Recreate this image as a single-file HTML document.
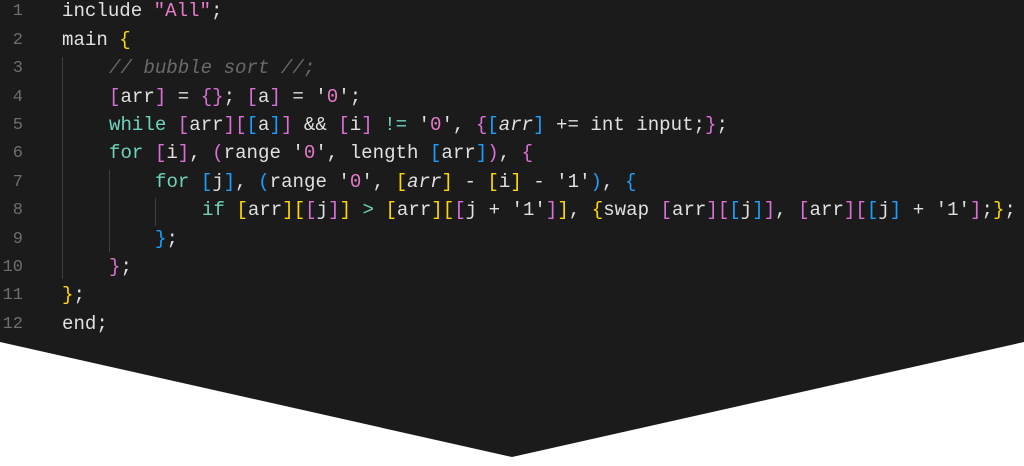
<!DOCTYPE html>
<html><head><meta charset="utf-8"><style>
html,body{margin:0;padding:0;width:1024px;height:466px;overflow:hidden;background:#fff}
.bg{position:absolute;left:0;top:0;width:1024px;height:466px;background:#1b1b1b;clip-path:polygon(0 0,1024px 0,1024px 342px,512px 457px,0 342px)}
.ln{position:absolute;left:0;width:23px;text-align:right;color:#6e6e6e;font:17px "Liberation Mono",monospace}
.l{position:absolute;white-space:pre;font:19.1px "Liberation Mono",monospace;color:#e0e0e0}
.g{position:absolute;width:1px;background:#404040}
.k{color:#6fd2bd}.s{color:#e67ac8}.c{color:#6a6a6a;font-style:italic}
.y{color:#ffd700}.p{color:#da70d6}.b{color:#1a9fff}.i{font-style:italic}
</style></head><body>
<div class="bg">
<div class="g" style="left:62px;top:57px;height:222px"></div>
<div class="g" style="left:109px;top:170px;height:82px"></div>
<div class="g" style="left:155px;top:198px;height:28px"></div>
<div class="ln" style="top:2px">1</div>
<div class="ln" style="top:31px">2</div>
<div class="ln" style="top:59px">3</div>
<div class="ln" style="top:88px">4</div>
<div class="ln" style="top:116px">5</div>
<div class="ln" style="top:144px">6</div>
<div class="ln" style="top:173px">7</div>
<div class="ln" style="top:201px">8</div>
<div class="ln" style="top:230px">9</div>
<div class="ln" style="top:258px">10</div>
<div class="ln" style="top:286px">11</div>
<div class="ln" style="top:315px">12</div>

<div class="l" style="left:62px;top:0px">include <span class="s">"All"</span>;</div>
<div class="l" style="left:62px;top:29px">main <span class="y">{</span></div>
<div class="l" style="left:109px;top:57px"><span class="c">// bubble sort //;</span></div>
<div class="l" style="left:109px;top:86px"><span class="p">[</span>arr<span class="p">]</span> = <span class="p">{}</span>; <span class="p">[</span>a<span class="p">]</span> = '<span class="s">0</span>';</div>
<div class="l" style="left:109px;top:114px"><span class="k">while</span> <span class="p">[</span>arr<span class="p">][</span><span class="b">[</span>a<span class="b">]</span><span class="p">]</span> &amp;&amp; <span class="p">[</span>i<span class="p">]</span> <span class="k">!=</span> '<span class="s">0</span>', <span class="p">{</span><span class="b">[</span><span class="i">arr</span><span class="b">]</span> += int input;<span class="p">}</span>;</div>
<div class="l" style="left:109px;top:142px"><span class="k">for</span> <span class="p">[</span>i<span class="p">]</span>, <span class="p">(</span>range '<span class="s">0</span>', length <span class="b">[</span>arr<span class="b">]</span><span class="p">)</span>, <span class="p">{</span></div>
<div class="l" style="left:155px;top:171px"><span class="k">for</span> <span class="b">[</span>j<span class="b">]</span>, <span class="b">(</span>range '<span class="s">0</span>', <span class="y">[</span><span class="i">arr</span><span class="y">]</span> - <span class="y">[</span>i<span class="y">]</span> - '1'<span class="b">)</span>, <span class="b">{</span></div>
<div class="l" style="left:202px;top:199px"><span class="k">if</span> <span class="y">[</span>arr<span class="y">][</span><span class="p">[</span>j<span class="p">]</span><span class="y">]</span> <span class="k">&gt;</span> <span class="y">[</span>arr<span class="y">][</span><span class="p">[</span>j + '1'<span class="p">]</span><span class="y">]</span>, <span class="y">{</span>swap <span class="p">[</span>arr<span class="p">][</span><span class="b">[</span>j<span class="b">]</span><span class="p">]</span>, <span class="p">[</span>arr<span class="p">][</span><span class="b">[</span>j<span class="b">]</span> + '1'<span class="p">]</span>;<span class="y">}</span>;</div>
<div class="l" style="left:155px;top:228px"><span class="b">}</span>;</div>
<div class="l" style="left:109px;top:256px"><span class="p">}</span>;</div>
<div class="l" style="left:62px;top:284px"><span class="y">}</span>;</div>
<div class="l" style="left:62px;top:313px">end;</div>
</div>
</body></html>
